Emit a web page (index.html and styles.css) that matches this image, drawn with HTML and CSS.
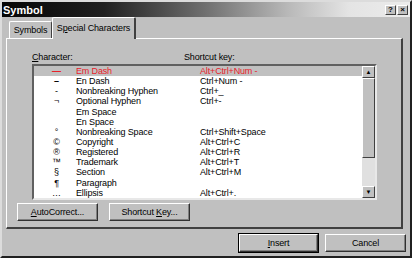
FILE: index.html
```
<!DOCTYPE html>
<html lang="en">
<head>
  <meta charset="UTF-8" />
  <title>Symbol</title>
  <link rel="stylesheet" href="styles.css">
</head>
<body>
  <div class="dialog">
    <div class="titlebar">
      <span class="title">Symbol</span>
      <div class="title-buttons">
        <span class="tbtn">?</span>
        <span class="tbtn close">&#215;</span>
      </div>
    </div>

    <div class="tabs">
      <div class="tab">Symbols</div>
      <div class="tab active">S<u>p</u>ecial Characters</div>
    </div>

    <div class="panel">
      <div class="labels">
        <span class="lbl-char"><u>C</u>haracter:</span>
        <span class="lbl-key">Shortcut key:</span>
      </div>

      <div class="listbox">
        <div class="rows">
          <div class="row selected"><span class="sym dash">&#8212;</span><span>Em Dash</span><span>Alt+Ctrl+Num -</span></div>
          <div class="row"><span class="sym dash">&#8211;</span><span>En Dash</span><span>Ctrl+Num -</span></div>
          <div class="row"><span class="sym">-</span><span>Nonbreaking Hyphen</span><span>Ctrl+_</span></div>
          <div class="row"><span class="sym">&#172;</span><span>Optional Hyphen</span><span>Ctrl+-</span></div>
          <div class="row"><span class="sym"></span><span>Em Space</span><span></span></div>
          <div class="row"><span class="sym"></span><span>En Space</span><span></span></div>
          <div class="row"><span class="sym">&#176;</span><span>Nonbreaking Space</span><span>Ctrl+Shift+Space</span></div>
          <div class="row"><span class="sym">&#169;</span><span>Copyright</span><span>Alt+Ctrl+C</span></div>
          <div class="row"><span class="sym">&#174;</span><span>Registered</span><span>Alt+Ctrl+R</span></div>
          <div class="row"><span class="sym">&#8482;</span><span>Trademark</span><span>Alt+Ctrl+T</span></div>
          <div class="row"><span class="sym">&#167;</span><span>Section</span><span>Alt+Ctrl+M</span></div>
          <div class="row"><span class="sym">&#182;</span><span>Paragraph</span><span></span></div>
          <div class="row"><span class="sym">&#8230;</span><span>Ellipsis</span><span>Alt+Ctrl+.</span></div>
        </div>
        <div class="scrollbar">
          <span class="sbtn">&#9650;</span>
          <span class="thumb"></span>
          <span class="track"></span>
          <span class="sbtn">&#9660;</span>
        </div>
      </div>

      <div class="panel-buttons">
        <button class="btn wide"><u>A</u>utoCorrect...</button>
        <button class="btn wide">Shortcut <u>K</u>ey...</button>
      </div>
    </div>

    <div class="footer">
      <button class="btn default"><u>I</u>nsert</button>
      <button class="btn">Cancel</button>
    </div>
  </div>
</body>
</html>
```

FILE: styles.css
```
body {
  margin: 0;
  background: #c0c0c0;
  font-family: "Liberation Sans", Arial, sans-serif;
  font-size: 9px;
  letter-spacing: -0.15px;
  color: #000;
}

.dialog {
  width: 412px;
  height: 258px;
  box-sizing: border-box;
  background: #c0c0c0;
  border: 2px solid;
  border-color: #dcdcdc #202020 #202020 #dcdcdc;
  display: flex;
  flex-direction: column;
}

.titlebar {
  height: 15px;
  flex-shrink: 0;
  display: flex;
  align-items: center;
  justify-content: space-between;
  padding: 0 2px 0 1px;
  background: linear-gradient(to right, #050505 0%, #202020 25%, #707070 50%, #b8b8b8 70%, #e4e4e4 85%, #ececec 100%);
}

.title {
  color: #fff;
  font-weight: bold;
  font-size: 11px;
  letter-spacing: 0;
}

.title-buttons {
  display: flex;
  gap: 1px;
}

.tbtn {
  width: 11px;
  height: 10px;
  box-sizing: border-box;
  background: #c0c0c0;
  border: 1px solid;
  border-color: #fff #404040 #404040 #fff;
  font-size: 8px;
  font-weight: bold;
  line-height: 8px;
  text-align: center;
  letter-spacing: 0;
}

.tabs {
  display: flex;
  align-items: flex-end;
  height: 21px;
  flex-shrink: 0;
  padding-left: 7px;
  position: relative;
  z-index: 1;
}

.tab {
  width: 43px;
  height: 17px;
  line-height: 17px;
  text-align: center;
  white-space: nowrap;
  border: 1px solid;
  border-bottom: none;
  border-color: #fff #404040 #404040 #fff;
  border-radius: 2px 2px 0 0;
  box-sizing: border-box;
}

.tab.active {
  width: 84px;
  height: 22px;
  line-height: 20px;
  margin-bottom: -1px;
  background: #c0c0c0;
  border-right-width: 2px;
}

.panel {
  margin: 0 7px 0 4px;
  height: 191px;
  flex-shrink: 0;
  box-sizing: border-box;
  border: 1px solid;
  border-right-width: 2px;
  border-bottom-width: 2px;
  border-color: #fff #404040 #404040 #fff;
  padding: 13px 0 0 10px;
}

.labels {
  display: flex;
  height: 12px;
  padding-left: 15px;
}

.lbl-char {
  width: 152px;
}

.listbox {
  margin-left: 15px;
  width: 345px;
  height: 136px;
  box-sizing: border-box;
  border: 2px solid;
  border-color: #606060 #e8e8e8 #e8e8e8 #606060;
  background: #fff;
  display: flex;
}

.rows {
  flex: 1;
}

.row {
  display: grid;
  grid-template-columns: 42px 124px 1fr;
  height: 10.15px;
  line-height: 10px;
  white-space: nowrap;
}

.row .sym {
  text-align: center;
  padding-left: 3px;
}

.row .dash {
  font-weight: bold;
}

.row.selected {
  background: #c0c0c0;
  color: #e8202a;
}

.scrollbar {
  width: 13px;
  display: flex;
  flex-direction: column;
  background: #c0c0c0;
}

.sbtn {
  height: 12px;
  box-sizing: border-box;
  border: 1px solid;
  border-color: #fff #404040 #404040 #fff;
  font-size: 6px;
  line-height: 10px;
  text-align: center;
}

.thumb {
  height: 80px;
  box-sizing: border-box;
  border: 1px solid;
  border-color: #fff #404040 #404040 #fff;
}

.track {
  flex: 1;
  background: #e0e0e0;
}

.panel-buttons {
  display: flex;
  gap: 11px;
  margin-top: 3px;
}

.btn {
  width: 81px;
  height: 18px;
  padding: 0;
  box-sizing: border-box;
  background: #c0c0c0;
  font-family: "Liberation Sans", Arial, sans-serif;
  font-size: 9px;
  letter-spacing: -0.15px;
  color: #000;
  border: 1px solid;
  border-color: #fff #303030 #303030 #fff;
  box-shadow: inset -1px -1px 0 #808080;
}

.footer {
  display: flex;
  justify-content: flex-end;
  gap: 6px;
  margin-top: 5px;
  padding-right: 4px;
}

.btn.default {
  outline: 1px solid #000;
  outline-offset: 0;
  width: 79px;
  margin-right: 1px;
}
```
